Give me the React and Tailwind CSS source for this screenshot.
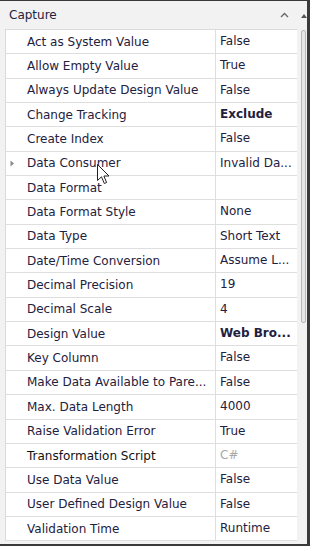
const rows = [
  { name: "Act as System Value", value: "False" },
  { name: "Allow Empty Value", value: "True" },
  { name: "Always Update Design Value", value: "False" },
  { name: "Change Tracking", value: "Exclude", bold: true },
  { name: "Create Index", value: "False" },
  { name: "Data Consumer", value: "Invalid Da...", expand: true },
  { name: "Data Format", value: "" },
  { name: "Data Format Style", value: "None" },
  { name: "Data Type", value: "Short Text" },
  { name: "Date/Time Conversion", value: "Assume L..." },
  { name: "Decimal Precision", value: "19" },
  { name: "Decimal Scale", value: "4" },
  { name: "Design Value", value: "Web Bro...", bold: true },
  { name: "Key Column", value: "False" },
  { name: "Make Data Available to Pare...", value: "False" },
  { name: "Max. Data Length", value: "4000" },
  { name: "Raise Validation Error", value: "True" },
  { name: "Transformation Script", value: "C#", muted: true, dark: true },
  { name: "Use Data Value", value: "False" },
  { name: "User Defined Design Value", value: "False" },
  { name: "Validation Time", value: "Runtime" },
];

function Cursor() {
  return (
    <svg className="absolute left-[97px] top-[164px]" width="13" height="21" viewBox="0 0 13 21">
      <path d="M0.5 0.5 L0.5 16.5 L4.5 12.8 L7.3 19.5 L9.6 18.5 L6.9 12 L12 12 Z" fill="#fff" stroke="#222" strokeWidth="1" strokeLinejoin="round" />
    </svg>
  );
}

export default function App() {
  return (
    <div className="relative h-[551px] w-[315px] overflow-hidden bg-white font-['DejaVu_Sans',sans-serif] text-[12px] text-[#1e2140]">
      <div className="flex h-[546px] w-[310px] border-r-[3px] border-b-[2px] border-t-[1px] border-[#3a3a3a] bg-[#f2f2f2]">
        <div className="flex w-[297px] flex-col">
          <div className="flex h-[28px] items-center justify-between pl-[9px] pr-[8px]">
            <span>Capture</span>
            <svg width="9" height="6" viewBox="0 0 9 6">
              <path d="M1 5 L4.5 1.5 L8 5" fill="none" stroke="#666" strokeWidth="1.3" />
            </svg>
          </div>
          <div className="ml-[5px] flex flex-col border-l border-t border-[#dadada] bg-white">
            {rows.map((r) => (
              <div key={r.name} className="relative flex h-[24.35px] items-center border-b border-[#dedede]">
                {r.expand && (
                  <svg className="absolute left-[4px] top-[8px]" width="5" height="7" viewBox="0 0 5 7">
                    <path d="M0.5 0.5 L4 3.5 L0.5 6.5 Z" fill="#8a8a8a" />
                  </svg>
                )}
                <div className={`w-[209px] shrink-0 overflow-hidden whitespace-nowrap pl-[21px] ${r.dark ? "text-[#111]" : ""}`}>
                  {r.name}
                </div>
                <div
                  className={`h-full flex-1 overflow-hidden whitespace-nowrap border-l border-[#dedede] pl-[4px] leading-[23px] ${
                    r.bold ? "font-bold" : ""
                  } ${r.muted ? "text-[#a8a8a8]" : ""}`}
                >
                  {r.value}
                </div>
              </div>
            ))}
          </div>
        </div>
        <div className="relative w-[10px]">
          <svg className="absolute left-[4px] top-[12px]" width="6" height="5" viewBox="0 0 6 5">
            <path d="M0 5 L3 1 L6 5 Z" fill="#555" />
          </svg>
          <div className="absolute left-[4px] top-[29px] h-[293px] w-[5px] rounded-[2px] border border-[#b9b9b9] bg-[#e6e6e6]" />
        </div>
      </div>
      <Cursor />
    </div>
  );
}
